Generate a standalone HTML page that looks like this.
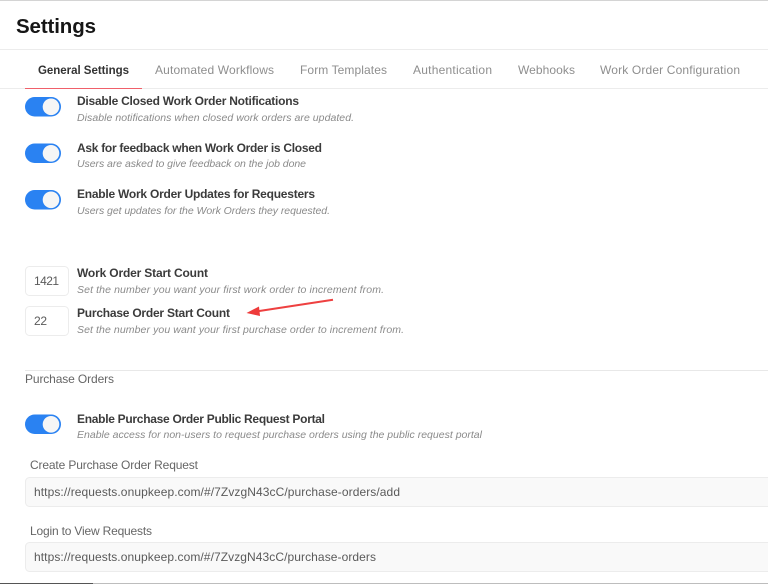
<!DOCTYPE html>
<html lang="en">
<head>
<meta charset="utf-8">
<title>Settings</title>
<style>
html,body{margin:0;padding:0;background:#fff;width:768px;height:584px;overflow:hidden}
svg{display:block;filter:blur(.35px)}
text{font-family:"Liberation Sans",sans-serif}
.h{font-size:12px;font-weight:700;fill:#3b3b3b}
.s{font-size:10.5px;font-style:italic;fill:#8a8a8a}
.t{font-size:12px;fill:#8e8e8e}
.l{font-size:12px;fill:#666}
.v{font-size:12px;fill:#5a5a5a}
</style>
</head>
<body>
<svg xmlns="http://www.w3.org/2000/svg" width="768" height="584" viewBox="0 0 768 584">
<rect width="768" height="584" fill="#fff"/>
<rect x="0" y="0" width="768" height="1" fill="#d4d4d4"/>
<text x="16" y="33" font-size="20.500" font-weight="700" fill="#161616" textLength="80" lengthAdjust="spacing">Settings</text>
<rect x="0" y="49" width="768" height="1" fill="#ececec"/>

<text x="38" y="74" font-size="11.500" font-weight="700" fill="#333" textLength="91">General Settings</text>
<text class="t" x="155" y="74" textLength="119">Automated Workflows</text>
<text class="t" x="300" y="74" textLength="87">Form Templates</text>
<text class="t" x="413" y="74" textLength="79">Authentication</text>
<text class="t" x="518" y="74" textLength="57">Webhooks</text>
<text class="t" x="600" y="74" textLength="140">Work Order Configuration</text>
<rect x="0" y="88" width="768" height="1" fill="#ececec"/>
<rect x="25" y="88" width="117" height="1" fill="#f0606a"/>

<rect x="25" y="97" width="36" height="19.500" rx="9.750" fill="#2a82f2"/>
<circle cx="51" cy="106.800" r="8.300" fill="#f6f6f6"/>
<text class="h" x="77" y="105" textLength="222">Disable Closed Work Order Notifications</text>
<text class="s" x="77" y="121" textLength="277">Disable notifications when closed work orders are updated.</text>

<rect x="25" y="143.500" width="36" height="19.500" rx="9.750" fill="#2a82f2"/>
<circle cx="51" cy="153.300" r="8.300" fill="#f6f6f6"/>
<text class="h" x="77" y="152" textLength="245">Ask for feedback when Work Order is Closed</text>
<text class="s" x="77" y="167" textLength="229">Users are asked to give feedback on the job done</text>

<rect x="25" y="190" width="36" height="19.500" rx="9.750" fill="#2a82f2"/>
<circle cx="51" cy="199.800" r="8.300" fill="#f6f6f6"/>
<text class="h" x="77" y="198" textLength="238">Enable Work Order Updates for Requesters</text>
<text class="s" x="77" y="214" textLength="253">Users get updates for the Work Orders they requested.</text>

<rect x="25.500" y="266.500" width="43" height="29" rx="4" fill="#fff" stroke="#ececec"/>
<text class="v" x="34" y="285" font-size="11.500" textLength="25">1421</text>
<text class="h" x="77" y="277" textLength="131">Work Order Start Count</text>
<text class="s" x="77" y="293" textLength="307">Set the number you want your first work order to increment from.</text>

<rect x="25.500" y="306.500" width="43" height="29" rx="4" fill="#fff" stroke="#ececec"/>
<text class="v" x="34" y="325" textLength="13">22</text>
<text class="h" x="77" y="317" textLength="153">Purchase Order Start Count</text>
<text class="s" x="77" y="333" textLength="327">Set the number you want your first purchase order to increment from.</text>

<path d="M333 299.800 L256 311.500" stroke="#ee4040" stroke-width="2" fill="none"/>
<path d="M246.500 313 L259 306.500 L260 316 Z" fill="#ee3b3b"/>

<rect x="25" y="370" width="743" height="1" fill="#e8e8e8"/>
<text class="l" x="25" y="383" textLength="89">Purchase Orders</text>

<rect x="25" y="414.500" width="36" height="19.500" rx="9.750" fill="#2a82f2"/>
<circle cx="51" cy="424.300" r="8.300" fill="#f6f6f6"/>
<text class="h" x="77" y="423" textLength="248">Enable Purchase Order Public Request Portal</text>
<text class="s" x="77" y="438" textLength="405">Enable access for non-users to request purchase orders using the public request portal</text>

<text class="l" x="30" y="469" textLength="168">Create Purchase Order Request</text>
<rect x="25.500" y="477.500" width="760" height="29" rx="4" fill="#f9f9f9" stroke="#ececec"/>
<text class="v" x="34" y="496" textLength="366">https://requests.onupkeep.com/#/7ZvzgN43cC/purchase-orders/add</text>

<text class="l" x="30" y="535" textLength="122">Login to View Requests</text>
<rect x="25.500" y="542.500" width="760" height="29" rx="4" fill="#f9f9f9" stroke="#ececec"/>
<text class="v" x="34" y="561" textLength="342">https://requests.onupkeep.com/#/7ZvzgN43cC/purchase-orders</text>

<rect x="0" y="583" width="768" height="1" fill="#bdbdbd"/>
<rect x="0" y="583" width="93" height="1" fill="#555"/>
</svg>
</body>
</html>
